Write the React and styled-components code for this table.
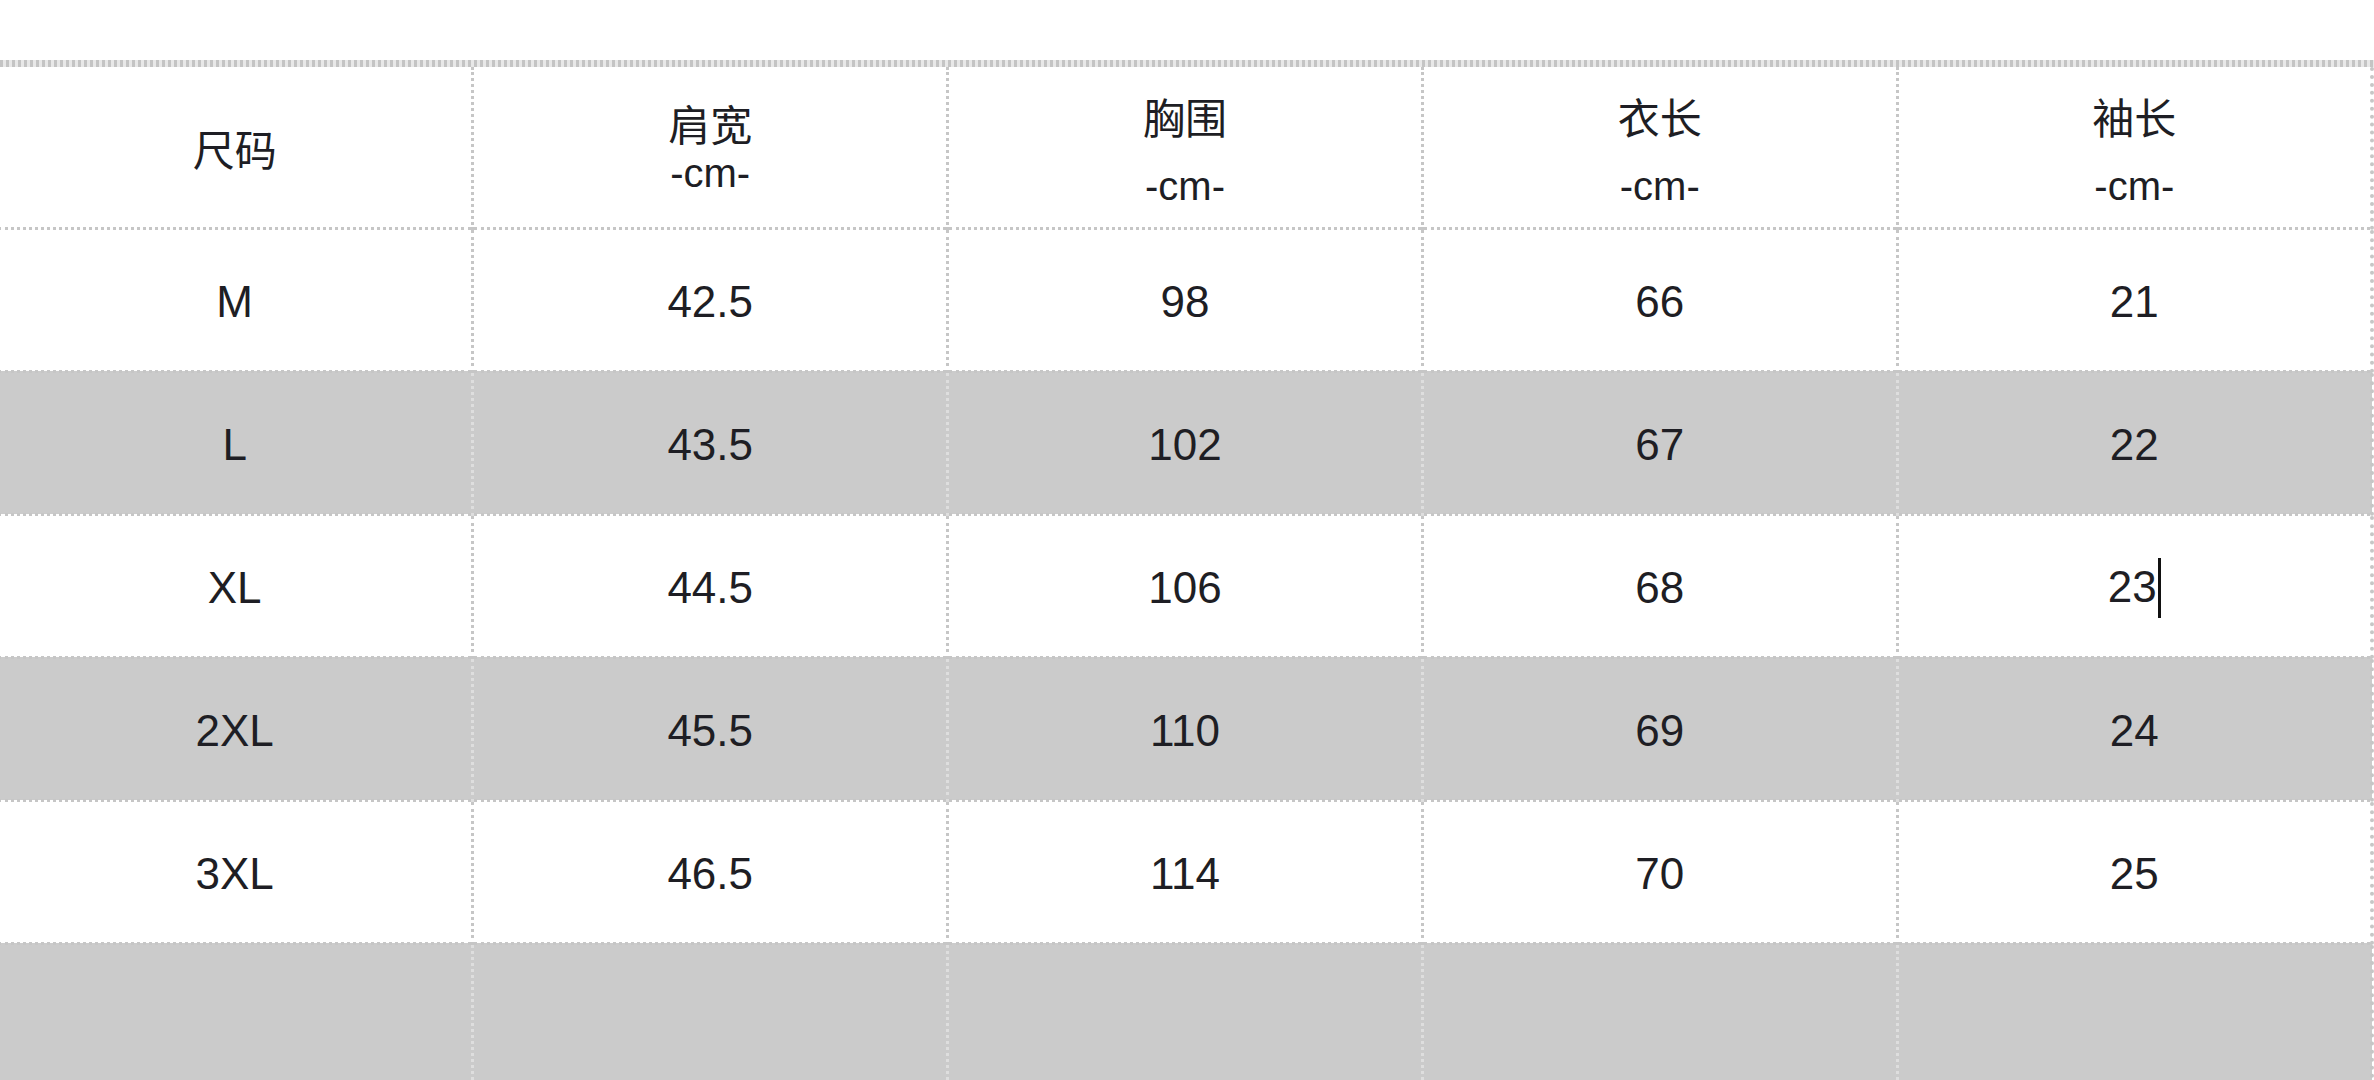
import styled, { createGlobalStyle } from "styled-components";

const GlobalStyle = createGlobalStyle`
  html, body {
    margin: 0;
    padding: 0;
    background: #ffffff;
    overflow: hidden;
  }
`;

const Page = styled.div`
  width: 2374px;
  height: 1080px;
  padding-top: 60px;
  box-sizing: border-box;
  background: #fff;
`;

const TopRule = styled.div`
  height: 7px;
  background: repeating-linear-gradient(90deg, #c4c4c4 0 3px, #e8e8e8 3px 6px);
`;

const Table = styled.table`
  width: 2376px;
  margin-left: -2px;
  border-collapse: collapse;
  table-layout: fixed;
  font-family: "Liberation Sans", "Noto Sans CJK SC", sans-serif;
  font-size: 44px;
  color: #1e1e24;
`;

const Row = styled.tr`
  height: ${(p) => p.$h || 143}px;
  background: ${(p) => (p.$shade ? "#cbcbcb" : "#ffffff")};
`;

const Cell = styled.td`
  padding: 5px 0 0;
  text-align: center;
  vertical-align: middle;
  border-top: 3px dotted #c6c6c6;
  border-right: 3px dotted ${(p) => (p.$shade ? "#dedede" : "#c6c6c6")};
  border-left: none;
  box-sizing: border-box;
  &:last-child {
    border-right: 4px dotted #c6c6c6;
  }
`;

const HeadCell = styled(Cell)`
  padding: 0;
  border-top: none;
  font-family: "Noto Sans CJK SC", "Liberation Sans", sans-serif;
  font-size: 42px;
`;

const Label = styled.div`
  line-height: ${(p) => (p.$tight ? 50 : 70)}px;
  padding-top: ${(p) => p.$offset}px;
`;

const Unit = styled.div`
  font-family: "Liberation Sans", sans-serif;
  font-size: 40px;
`;

const Caret = styled.span`
  display: inline-block;
  width: 3px;
  height: 60px;
  margin-left: 1px;
  background: #111;
  vertical-align: -16px;
`;

const headers = [
  { name: "尺码", offset: 2 },
  { name: "肩宽", unit: "-cm-", tight: true, offset: 2 },
  { name: "胸围", unit: "-cm-", offset: 8 },
  { name: "衣长", unit: "-cm-", offset: 8 },
  { name: "袖长", unit: "-cm-", offset: 8 },
];

const rows = [
  ["M", "42.5", "98", "66", "21"],
  ["L", "43.5", "102", "67", "22"],
  ["XL", "44.5", "106", "68", "23"],
  ["2XL", "45.5", "110", "69", "24"],
  ["3XL", "46.5", "114", "70", "25"],
  ["", "", "", "", ""],
];

export default function App() {
  return (
    <Page>
      <GlobalStyle />
      <TopRule />
      <Table>
        <tbody>
          <Row $h={161}>
            {headers.map((h) => (
              <HeadCell key={h.name}>
                <Label $tight={h.tight} $offset={h.offset}>
                  <div>{h.name}</div>
                  {h.unit && <Unit>{h.unit}</Unit>}
                </Label>
              </HeadCell>
            ))}
          </Row>
          {rows.map((r, i) => {
            const shade = i % 2 === 1;
            return (
              <Row key={i} $shade={shade}>
                {r.map((v, j) => (
                  <Cell key={j} $shade={shade}>
                    {v}
                    {i === 2 && j === 4 && <Caret />}
                  </Cell>
                ))}
              </Row>
            );
          })}
        </tbody>
      </Table>
    </Page>
  );
}
